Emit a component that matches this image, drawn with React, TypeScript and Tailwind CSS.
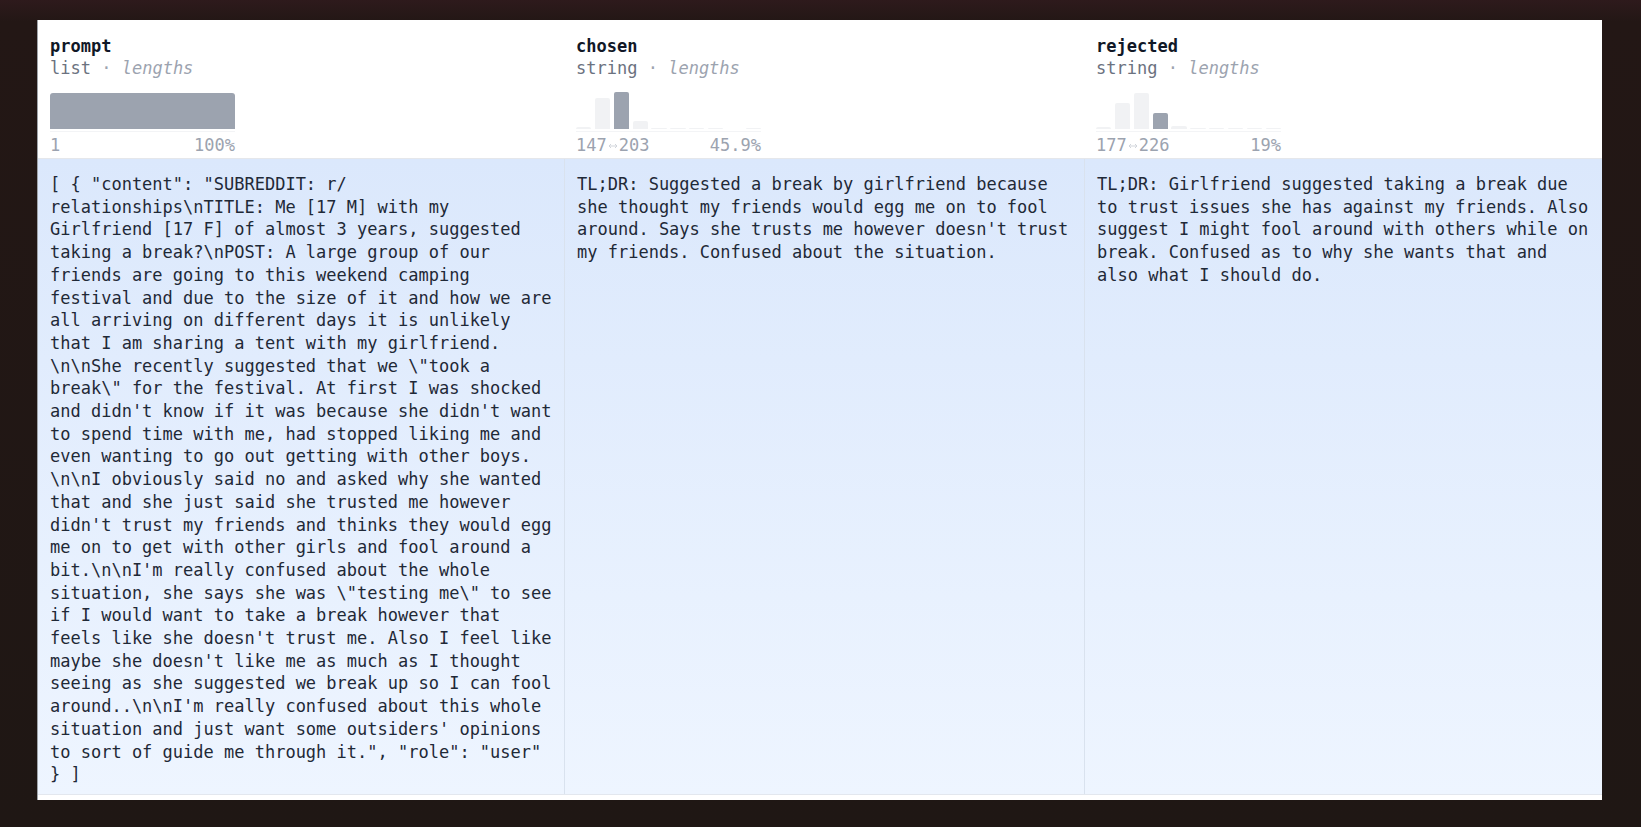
import React from "react";

const promptParts = [
  `[ { "content": "SUBREDDIT: r/`,
  `relationships\\nTITLE: Me [17 M] with my Girlfriend [17 F] of almost 3 years, suggested taking a break?\\nPOST: A large group of our friends are going to this weekend camping festival and due to the size of it and how we are all arriving on different days it is unlikely that I am sharing a tent with my girlfriend.`,
  `\\n\\nShe recently suggested that we \\"took a break\\" for the festival. At first I was shocked and didn't know if it was because she didn't want to spend time with me, had stopped liking me and even wanting to go out getting with other boys.`,
  `\\n\\nI obviously said no and asked why she wanted that and she just said she trusted me however didn't trust my friends and thinks they would egg me on to get with other girls and fool around a bit.\\n\\nI'm really confused about the whole situation, she says she was \\"testing me\\" to see if I would want to take a break however that feels like she doesn't trust me. Also I feel like maybe she doesn't like me as much as I thought seeing as she suggested we break up so I can fool around..\\n\\nI'm really confused about this whole situation and just want some outsiders' opinions to sort of guide me through it.", "role": "user" } ]`,
];

const chosen = `TL;DR: Suggested a break by girlfriend because she thought my friends would egg me on to fool around. Says she trusts me however doesn't trust my friends. Confused about the situation.`;

const rejected = `TL;DR: Girlfriend suggested taking a break due to trust issues she has against my friends. Also suggest I might fool around with others while on break. Confused as to why she wants that and also what I should do.`;

function Hist({ heights, hi }: { heights: number[]; hi: number }) {
  return (
    <div className="flex h-[37px] w-[185px] items-end gap-[3.5px]">
      {heights.map((h, i) => (
        <div
          key={i}
          className={
            "flex-1 rounded-t-[2px] " +
            (i === hi ? "bg-[#9ca3af]" : "bg-[#f1f2f4]")
          }
          style={{ height: h }}
        />
      ))}
    </div>
  );
}

function Arrow() {
  return (
    <svg
      width="10"
      height="8"
      viewBox="0 0 10 8"
      className="mx-[1px] inline-block align-middle"
      fill="none"
      stroke="#d1d5db"
      strokeWidth="1"
    >
      <path d="M1 4h8M3 2L1 4l2 2M7 2l2 2-2 2" />
    </svg>
  );
}

function HeaderCell({
  name,
  type,
  children,
  left,
  right,
}: {
  name: string;
  type: string;
  children: React.ReactNode;
  left: React.ReactNode;
  right: string;
}) {
  return (
    <div className="h-[138px] px-3 pt-[14.5px]">
      <div className="text-[17px] font-bold leading-[22.7px] text-[#111827]">{name}</div>
      <div className="text-[17px] leading-[22.7px] text-[#6b7280]">
        {type} <span className="text-[#9ca3af]">·</span>{" "}
        <span className="italic text-[#9ca3af]">lengths</span>
      </div>
      <div className="mt-[12.5px] w-[185px]">
        {children}
        <div className="mt-[2px] h-px w-[185px] bg-[#f3f4f6]" />
        <div className="mt-[2px] flex w-[185px] justify-between text-[17px] leading-[22px] text-[#9ca3af]">
          <span>{left}</span>
          <span>{right}</span>
        </div>
      </div>
    </div>
  );
}

export default function App() {
  return (
    <div className="h-[827px] w-full overflow-hidden bg-[linear-gradient(to_bottom,#2e1a1c_0px,#231715_22px,#1f1714_100%)] pl-[37px] pr-[39px] pt-[20px] font-[DejaVu_Sans_Mono,Liberation_Mono,monospace]">
      <div className="flex h-[780px] flex-col overflow-hidden border-l border-[#9ea3a8] bg-white">
        <div className="grid grid-cols-[526px_520px_1fr] border-b border-[#e5e7eb] bg-white">
          <HeaderCell name="prompt" type="list" left="1" right="100%">
            <div className="flex h-[37px] w-[185px] items-end">
              <div className="h-[36px] w-full rounded-t-[3px] bg-[#9ca3af]" />
            </div>
          </HeaderCell>
          <HeaderCell
            name="chosen"
            type="string"
            left={
              <>
                147
                <Arrow />
                203
              </>
            }
            right="45.9%"
          >
            <Hist heights={[2, 31, 37, 8, 1, 1, 1, 1, 0, 1]} hi={2} />
          </HeaderCell>
          <HeaderCell
            name="rejected"
            type="string"
            left={
              <>
                177
                <Arrow />
                226
              </>
            }
            right="19%"
          >
            <Hist heights={[2, 26, 36, 16, 3, 1, 1, 1, 1, 1]} hi={3} />
          </HeaderCell>
        </div>
        <div className="grid h-[636px] grid-cols-[526px_520px_1fr] border-b border-[#e3e7ee] bg-gradient-to-b from-[#dbe8fc] to-[#eef5ff] text-[17px] leading-[22.7px] text-[#1f2937]">
          <div className="pl-3 pr-2 pt-[14px]">
            {promptParts.map((p, i) => (
              <React.Fragment key={i}>
                {i > 0 && <wbr />}
                {p}
              </React.Fragment>
            ))}
          </div>
          <div className="border-l border-[#d9e2ee] pl-3 pr-2 pt-[14px]">{chosen}</div>
          <div className="border-l border-[#d9e2ee] pl-3 pr-2 pt-[14px]">{rejected}</div>
        </div>
        <div className="flex-1 bg-white" />
      </div>
    </div>
  );
}
